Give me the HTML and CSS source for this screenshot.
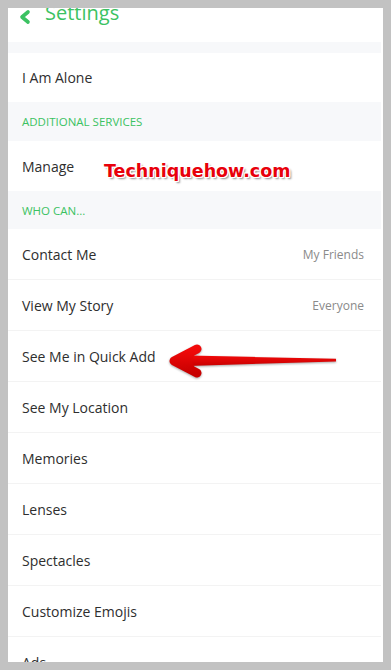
FILE: index.html
```html
<!DOCTYPE html>
<html lang="en">
<head>
    <meta charset="UTF-8">
    <title>Settings</title>
    <link rel="stylesheet" href="styles.css">
</head>
<body>
    <div class="screen">
        <div class="topbar">
            <svg class="back" width="14" height="16" viewBox="0 0 14 16">
                <polyline points="10,3 4,8 10,13" fill="none" stroke="#3bc262" stroke-width="3.6" stroke-linecap="round" stroke-linejoin="round"/>
            </svg>
            <span class="title">Settings</span>
        </div>

        <div class="list">
            <div class="section-title gap"></div>
            <div class="row last first-row">I Am Alone</div>

            <div class="section-title">ADDITIONAL SERVICES</div>
            <div class="row last">Manage</div>

            <div class="section-title short">WHO CAN...</div>
            <div class="row"><span>Contact Me</span><span class="value">My Friends</span></div>
            <div class="row"><span>View My Story</span><span class="value">Everyone</span></div>
            <div class="row">See Me in Quick Add</div>
            <div class="row">See My Location</div>
            <div class="row">Memories</div>
            <div class="row">Lenses</div>
            <div class="row">Spectacles</div>
            <div class="row">Customize Emojis</div>
            <div class="row">Ads</div>
        </div>

        <div class="watermark">Techniquehow.com</div>

        <svg class="arrow" width="190" height="50" viewBox="160 338 190 50">
            <defs>
                <linearGradient id="red" x1="0" y1="0" x2="0" y2="1">
                    <stop offset="0" stop-color="#f20a0a"/>
                    <stop offset="1" stop-color="#c80000"/>
                </linearGradient>
            </defs>
            <polygon points="188,355.5 336,358.8 336,361.4 188,366" fill="url(#red)"/>
            <polyline points="197,349 174,361 197,373" fill="none" stroke="url(#red)" stroke-width="9" stroke-linecap="round" stroke-linejoin="round"/>
            <polygon points="176,361 196,350.5 192,361 196,371.5" fill="url(#red)"/>
        </svg>
    </div>
</body>
</html>
```

FILE: styles.css
```css
html {
    background: #c2c2c2;
}
body {
    margin: 0;
    padding: 8px;
    background: #c2c2c2;
    font-family: 'Open Sans', sans-serif;
}
.screen {
    position: relative;
    width: 375px;
    height: 654px;
    overflow: hidden;
    background: #fff;
}
.topbar {
    height: 34px;
    display: flex;
    align-items: flex-start;
}
.back {
    margin: 1px 0 0 10px;
}
.title {
    margin: -5px 0 0 13px;
    font-size: 20px;
    line-height: 20px;
    color: #3bc262;
}
.list {
    margin-right: 2px;
}
.section-title {
    height: 39px;
    display: flex;
    align-items: center;
    padding-left: 14px;
    background: #f7f8fa;
    color: #3bc262;
    font-size: 11.5px;
    font-weight: 500;
}
.section-title.gap {
    height: 11px;
}
.section-title.short {
    height: 38px;
}
.row {
    height: 50px;
    display: flex;
    align-items: center;
    justify-content: space-between;
    padding: 0 17px 0 14px;
    border-bottom: 1px solid #f3f3f3;
    color: #2e2e2e;
    font-size: 14px;
    font-weight: 500;
}
.row.last {
    border-bottom: none;
}
.row.first-row {
    height: 49px;
}
.value {
    color: #8a8a8a;
    font-size: 12px;
    font-weight: 400;
}
.watermark {
    position: absolute;
    left: 96px;
    top: 155px;
    font-family: 'DejaVu Sans', sans-serif;
    font-weight: bold;
    font-size: 17.5px;
    line-height: 1;
    color: #e8000b;
    text-shadow: 1px 0 0 #fff, -1px 0 0 #fff, 0 1px 0 #fff, 0 -1px 0 #fff,
                 1px 1px 0 #fff, -1px -1px 0 #fff, 1px -1px 0 #fff, -1px 1px 0 #fff,
                 2px 2px 2px rgba(0,0,0,0.45);
}
.arrow {
    position: absolute;
    left: 152px;
    top: 330px;
    filter: drop-shadow(0 1.5px 1px rgba(0,0,0,0.35));
}
```
